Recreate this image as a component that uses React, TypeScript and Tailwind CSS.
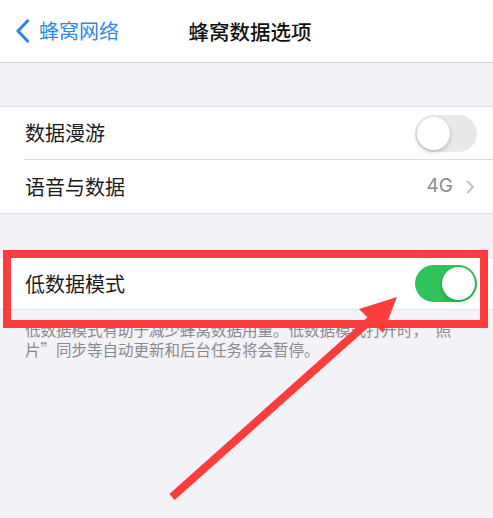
import React from "react";

const font = { fontFamily: '"Noto Sans CJK SC", "Noto Sans", sans-serif' };

function Toggle({ on }: { on: boolean }) {
  return (
    <div
      className={
        "relative w-[62px] h-[37px] rounded-full " +
        (on ? "bg-[#30c35b]" : "bg-[#e9e9eb]")
      }
    >
      <div
        className={
          "absolute top-[2px] w-[33px] h-[33px] rounded-full bg-white shadow-[0_2px_4px_rgba(0,0,0,0.22)] " +
          (on ? "right-[2px]" : "left-[2px]")
        }
      />
    </div>
  );
}

export default function App() {
  return (
    <div
      className="relative w-full h-[518px] bg-[#f2f2f7] overflow-hidden antialiased"
      style={font}
    >
      {/* Header */}
      <div className="h-[63px] bg-white border-b border-[#d4d4d8] grid grid-cols-[1fr_auto_1fr] items-center">
        <div className="flex items-center pl-[15px] gap-[9px] text-[#3088e4]">
          <svg width="15" height="24" viewBox="0 0 15 24" fill="none">
            <path
              d="M12.5 2 L3 12 L12.5 22"
              stroke="currentColor"
              strokeWidth="3.2"
              strokeLinecap="round"
              strokeLinejoin="round"
            />
          </svg>
          <span className="text-[20px] leading-none">蜂窝网络</span>
        </div>
        <div className="text-[20.5px] font-medium text-[#111] leading-none pl-[7px]">
          蜂窝数据选项
        </div>
        <div />
      </div>

      <div className="h-[43px]" />

      {/* Group 1 */}
      <div className="bg-white border-y border-[#e0e0e4]">
        <div className="h-[52px] flex items-center justify-between pl-[25px] pr-[16px]">
          <span className="text-[20px] text-[#1c1c1e]">数据漫游</span>
          <Toggle on={false} />
        </div>
        <div className="ml-[24px] h-px bg-[#dedee2]" />
        <div className="h-[53px] flex items-center justify-between pl-[25px] pr-[18px]">
          <span className="text-[20px] text-[#1c1c1e]">语音与数据</span>
          <div className="flex items-center gap-[13px] text-[#8e8e93]">
            <span className="text-[19px]" style={{ fontFamily: '"Inter", "Noto Sans", sans-serif' }}>4G</span>
            <svg width="9" height="14" viewBox="0 0 9 14" fill="none">
              <path
                d="M1.5 1.5 L7 7 L1.5 12.5"
                stroke="#c4c4c8"
                strokeWidth="2"
                strokeLinecap="round"
                strokeLinejoin="round"
              />
            </svg>
          </div>
        </div>
      </div>

      <div className="h-[43px]" />

      {/* Low data mode */}
      <div className="bg-white border-y border-[#e6e6ea]">
        <div className="h-[51px] flex items-center justify-between pl-[25px] pr-[16px]">
          <span className="text-[20px] text-[#1c1c1e]">低数据模式</span>
          <Toggle on={true} />
        </div>
      </div>
      <div className="pl-[25px] pr-[20px] pt-[9px] text-[15.5px] leading-[20px] text-[#8a8a8e] whitespace-nowrap">
        <div>低数据模式有助于减少蜂窝数据用量。低数据模式打开时，“照</div>
        <div>片”同步等自动更新和后台任务将会暂停。</div>
      </div>

      {/* Red annotation box */}
      <div className="absolute left-[3px] top-[250px] w-[485px] h-[78px] border-[8px] border-[#fd3c3c]" />

      {/* Red arrow */}
      <svg
        className="absolute left-0 top-0"
        width="493"
        height="518"
        viewBox="0 0 493 518"
      >
        <line
          x1="172"
          y1="497"
          x2="375"
          y2="316"
          stroke="#fd3c3c"
          strokeWidth="8"
          strokeLinecap="butt"
        />
        <polygon points="397,297 359,309 383,333" fill="#fd3c3c" />
      </svg>
    </div>
  );
}
